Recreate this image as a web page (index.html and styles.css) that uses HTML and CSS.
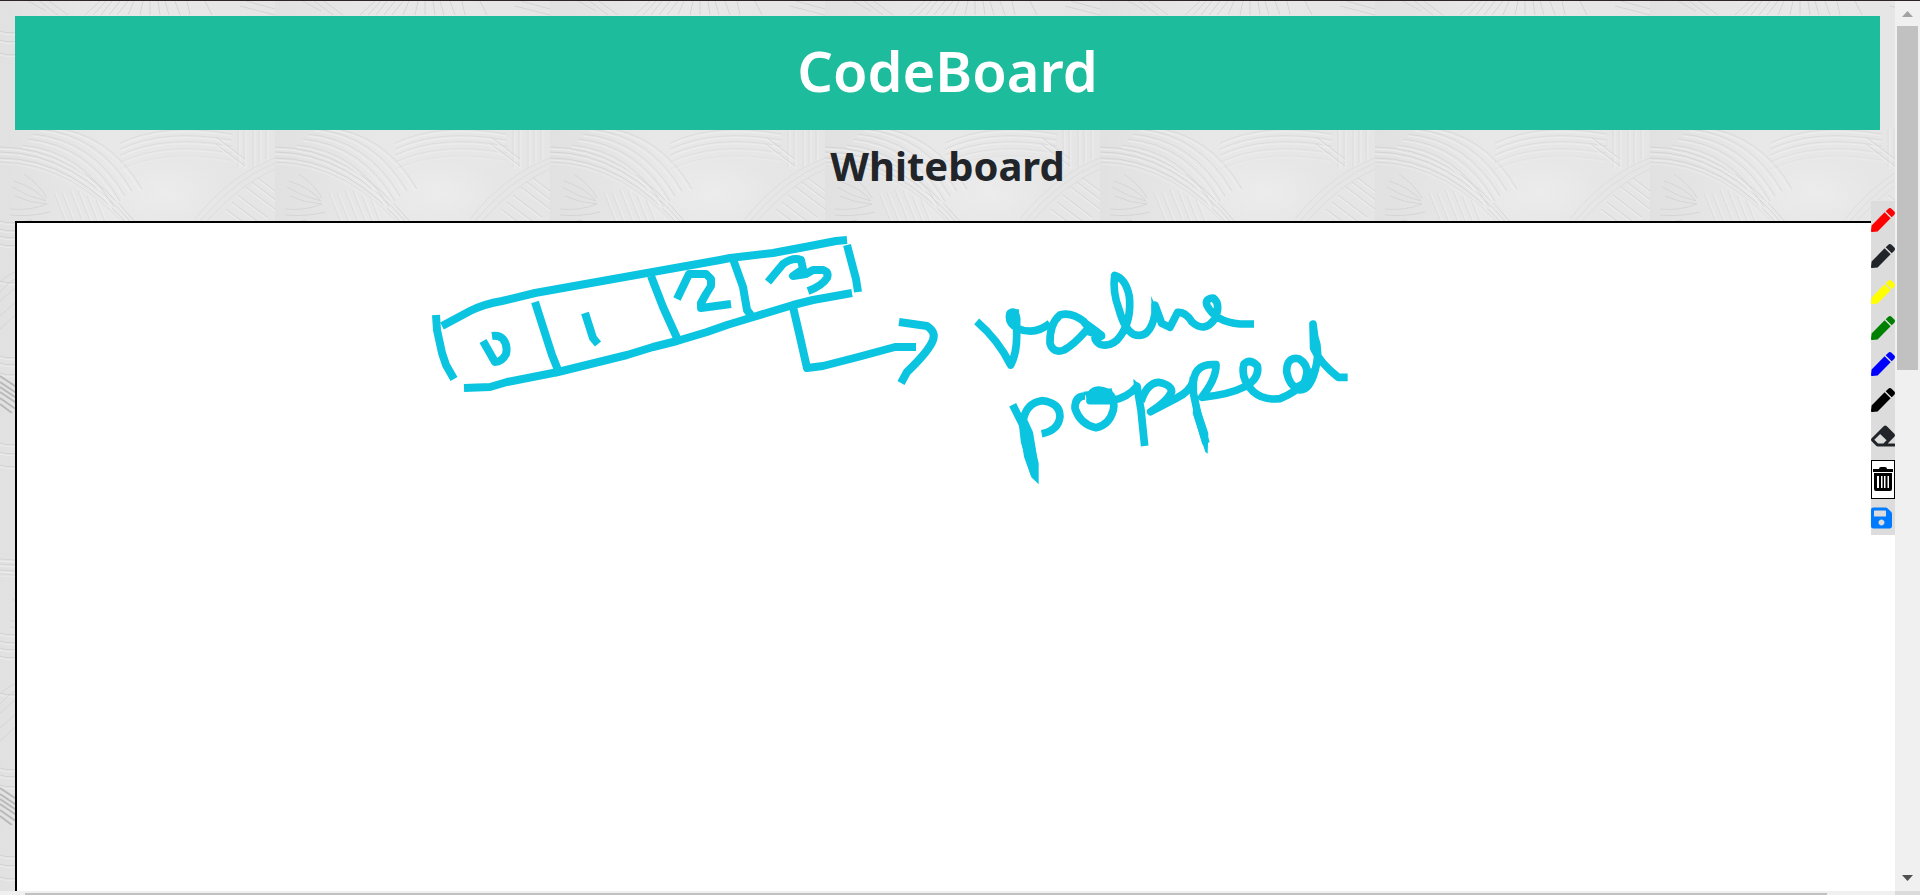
FILE: index.html
```html
<!DOCTYPE html>
<html lang="en">
<head>
<meta charset="utf-8">
<title>CodeBoard</title>
<link rel="stylesheet" href="styles.css">
</head>
<body>
<svg class="symbols" aria-hidden="true">
  <symbol id="pen" viewBox="0 0 512 512"><path d="M290.74 93.24l128.02 128.02-277.99 277.99-114.14 12.6C11.35 513.54-1.56 500.62.14 485.34l12.7-114.22 277.9-277.88zm207.2-19.06l-60.11-60.11c-18.75-18.75-49.16-18.75-67.91 0l-56.55 56.55 128.02 128.02 56.55-56.55c18.75-18.76 18.75-49.16 0-67.91z"/></symbol>
</svg>
<div class="window">
  <div class="page">
    <header class="banner"><h1>CodeBoard</h1></header>
    <h2 class="section-title">Whiteboard</h2>
    <main class="board">
      <svg class="drawing" viewBox="17 223 1400 300" role="img" aria-label="Array with cells 0 to 3, last value popped">
        <g class="ink">
          <path d="M436 315L437 330L442 353L446 365L454 379"/>
          <path d="M442 326L470 311Q484 304 502 301L535 293L720 260L730 258L773 253L805 247L836 241L847 240"/>
          <path d="M464 388L490 387L507 382L558 372L627 355L653 347L677 341L707 332L727 325L750 318L793 305L813 300L852 293"/>
          <path d="M535 302L552 355L560 375"/>
          <path d="M651 276L663 307L677 338"/>
          <path d="M733 259L743 287L747 310L753 318"/>
          <path d="M847 245L856 279L858 292"/>
          <path d="M483 341L495 362Q502 362 506 354Q508 345 503 339Q499 335 492 336"/>
          <path d="M585 313L593 338L598 344"/>
          <path d="M677 299L689 274L706 274L711 279V286L706 294L701 303V308L731 304"/>
          <path d="M768 282L783 264Q793 257 801 260L803 269L793 276L806 274L813 270H823Q829 272 827 278Q822 286 808 291"/>
          <path d="M793 307L800 337L807 368L823 366L858 357L895 347H916"/>
          <path d="M899 322L927 326Q936 332 933 340Q929 351 907 372L901 383"/>
        </g>
        <g class="ink ink-script" transform="translate(950 250) scale(.33333)">
          <path d="M80 214Q145 270 182 345Q200 310 200 260V205Q195 178 180 190Q172 220 205 236Q255 257 300 220"/>
          <path d="M405 217Q365 185 330 195Q298 222 300 280Q310 312 342 300Q370 285 408 242L455 258L405 220L440 245Q427 268 450 283Q488 293 512 257Q545 210 538 140Q528 86 494 76Q487 125 507 178Q522 236 550 253Q600 270 615 192V165L635 220L660 232L683 187Q708 185 726 216Q764 250 794 207Q814 163 790 144Q764 145 771 166Q795 215 870 222H912"/>
          <path d="M188 464L218 524L224 575L240 630L253 670L247 605L238 550L220 510Q228 460 275 452Q330 458 330 500Q325 542 275 551"/>
          <path d="M405 438Q375 438 375 475Q390 523 438 533Q478 525 490 480Q500 425 445 420Q420 422 420 452H485Q533 443 561 409L573 480L584 588"/>
          <path d="M573 455Q590 400 625 397Q664 404 665 425Q650 455 602 485L680 444Q720 425 731 390Q738 339 798 344Q800 385 755 442Q835 435 885 410Q930 385 922 347Q899 325 882 342Q870 385 910 425Q940 452 990 446Q1040 426 1070 390Q1079 345 1046 326Q1010 320 1010 365Q1018 410 1050 420Q1085 420 1100 340Q1108 298 1094 260L1089 222L1091 295Q1110 340 1165 382H1193"/>
          <path d="M730 380V428L745 500L768 580"/>
          <path d="M1088 365L1070 405M1035 414L1075 395"/>
          <path class="ink-fill" d="M550 386L572 407L568 425L552 420ZM603 138L630 195L608 210ZM180 178H207V225H176ZM230 510L250 570L266 640V703L244 682L222 620L208 520ZM735 430L775 550L773 611L766 606L728 490ZM1060 365L1095 350L1100 380L1083 415L1045 425ZM405 205L465 250L445 272L400 235ZM400 425L485 415L495 460H420Z"/>
        </g>
      </svg>
    </main>
    <div class="tools" role="toolbar" aria-label="Drawing tools">
      <button class="tool red" aria-label="Red pen"><svg><use href="#pen"/></svg></button>
      <button class="tool" aria-label="Dark pen"><svg><use href="#pen"/></svg></button>
      <button class="tool yellow" aria-label="Yellow pen"><svg><use href="#pen"/></svg></button>
      <button class="tool green" aria-label="Green pen"><svg><use href="#pen"/></svg></button>
      <button class="tool blue" aria-label="Blue pen"><svg><use href="#pen"/></svg></button>
      <button class="tool black" aria-label="Black pen"><svg><use href="#pen"/></svg></button>
      <button class="tool" aria-label="Eraser"><svg viewBox="0 0 512 512"><path d="M497.941 273.941c18.745-18.745 18.745-49.137 0-67.882l-160-160c-18.745-18.745-49.136-18.746-67.883 0l-256 256c-18.745 18.745-18.745 49.137 0 67.882l96 96A48.004 48.004 0 0 0 144 480h356c6.627 0 12-5.373 12-12v-40c0-6.627-5.373-12-12-12H355.883l142.058-142.059zm-302.627-62.627l137.373 137.373L265.373 416H150.628l-80-80 124.686-124.686z"/></svg></button>
      <button class="tool clear" aria-label="Clear board"><svg viewBox="0 0 22 26"><path d="M1 2H7Q7 0 9 0H13Q15 0 15 2H21V5H1Z"/><path fill-rule="evenodd" d="M2 6H20V22Q20 24 18 24H4Q2 24 2 22ZM5 9V21H7V9ZM9 9V21H10.500V9ZM12 9V21H13.500V9ZM15.500 9V21H17V9Z"/></svg></button>
      <button class="tool save" aria-label="Save"><svg viewBox="0 0 448 512"><path d="M433.941 129.941l-83.882-83.882A48 48 0 0 0 316.118 32H48C21.49 32 0 53.49 0 80v352c0 26.51 21.49 48 48 48h352c26.51 0 48-21.49 48-48V163.882a48 48 0 0 0-14.059-33.941zM224 416c-35.346 0-64-28.654-64-64 0-35.346 28.654-64 64-64s64 28.654 64 64c0 35.346-28.654 64-64 64zm96-304.52V212c0 6.627-5.373 12-12 12H76c-6.627 0-12-5.373-12-12V108c0-6.627 5.373-12 12-12h228.52c3.183 0 6.235 1.264 8.485 3.515l3.48 3.48A11.996 11.996 0 0 1 320 111.48z"/></svg></button>
    </div>
  </div>
  <div class="scroll-y" aria-hidden="true">
    <svg class="arrow" viewBox="0 0 25 25"><path fill="#a3a3a3" d="M7 16L12.500 10L18 16Z"/></svg>
    <div class="track-y"><div class="thumb-y"></div></div>
    <svg class="arrow" viewBox="0 0 25 25"><path fill="#505050" d="M7 9H18L12.500 15Z"/></svg>
  </div>
  <div class="scroll-x" aria-hidden="true"><div class="thumb-x"></div></div>
  <div class="corner" aria-hidden="true"></div>
</div>
</body>
</html>
```
FILE: styles.css
```css
* {
  box-sizing: border-box;
}

body {
  margin: 0;
  color: #212529;
  font-family: "Noto Sans", "Open Sans", sans-serif;
}

.symbols {
  position: absolute;
  width: 0;
  height: 0;
}

.window {
  display: grid;
  grid-template-columns: minmax(0, 1fr) 25px;
  grid-template-rows: minmax(0, 1fr) 4px;
  height: 100vh;
  border-top: 1px solid #2b2529;
  overflow: hidden;
}

/* Brushed plaster tile */
.page {
  position: relative;
  display: flex;
  flex-direction: column;
  padding: 15px 0 0 15px;
  overflow: hidden;
  background-color: #e5e5e5;
  background-size: 275px 412px;
  background-image: url("data:image/svg+xml,%3Csvg xmlns='http://www.w3.org/2000/svg' xmlns:xlink='http://www.w3.org/1999/xlink' width='275' height='412' viewBox='0 0 275 412'%3E%3Cdefs%3E%3ClinearGradient id='l'%3E%3Cstop stop-color='%23e1e1e1'/%3E%3Cstop offset='.4' stop-color='%23e8e8e8'/%3E%3Cstop offset='1' stop-color='%23e5e5e5'/%3E%3C/linearGradient%3E%3CradialGradient id='b'%3E%3Cstop stop-color='%23ececec'/%3E%3Cstop offset='1' stop-color='%23ececec' stop-opacity='0'/%3E%3C/radialGradient%3E%3Cg id='a' fill='none'%3E%3Cpath stroke='%23cecece' d='M0 146Q75 146 136 222'/%3E%3Cpath stroke='%23f1f1f1' d='M0 148Q73 148 134 224'/%3E%3C/g%3E%3Cg id='c' fill='none'%3E%3Cpath stroke='%23d3d3d3' d='M40 128Q100 134 132 190'/%3E%3Cpath stroke='%23f2f2f2' d='M40 130Q97 136 130 192'/%3E%3C/g%3E%3Cg id='d' fill='none'%3E%3Cpath stroke='%23d7d7d7' d='M120 142Q165 121 232 133'/%3E%3Cpath stroke='%23f1f1f1' d='M121 144Q165 123 231 135'/%3E%3C/g%3E%3Cg id='v'%3E%3Cpath stroke='%23d9d9d9' d='M238 128V166'/%3E%3Cpath stroke='%23efefef' d='M240 128V168'/%3E%3C/g%3E%3Cg id='h' fill='none'%3E%3Cpath stroke='%23d0d0d0' d='M246 186L275 208'/%3E%3Cpath stroke='%23f1f1f1' d='M246 188L275 210'/%3E%3C/g%3E%3Cg id='k'%3E%3Cpath stroke='%23dadada' d='M54 192L66 222'/%3E%3Cpath stroke='%23efefef' d='M56 192L68 222'/%3E%3C/g%3E%3Cg id='s' fill='none'%3E%3Cpath stroke='%23cccccc' d='M0 220Q10 224 32 219'/%3E%3Cpath stroke='%23eeeeee' d='M0 222Q10 226 32 221'/%3E%3C/g%3E%3C/defs%3E%3Crect width='275' height='412' fill='url(%23l)'/%3E%3Cellipse cx='165' cy='192' rx='60' ry='35' fill='url(%23b)'/%3E%3Cg stroke-width='1' opacity='.7'%3E%3Cuse xlink:href='%23a'/%3E%3Cuse xlink:href='%23a' y='5'/%3E%3Cuse xlink:href='%23a' y='11'/%3E%3Cuse xlink:href='%23a' y='15' opacity='.6'/%3E%3Cuse xlink:href='%23c'/%3E%3Cuse xlink:href='%23c' x='10' y='-2'/%3E%3Cuse xlink:href='%23c' x='-7' y='5'/%3E%3Cuse xlink:href='%23c' x='-12' y='10'/%3E%3Cuse xlink:href='%23c' x='-18' y='16'/%3E%3Cuse xlink:href='%23d'/%3E%3Cuse xlink:href='%23d' y='6'/%3E%3Cuse xlink:href='%23d' y='12'/%3E%3Cuse xlink:href='%23d' y='19' opacity='.7'/%3E%3Cuse xlink:href='%23d' y='26' opacity='.4'/%3E%3Cuse xlink:href='%23v'/%3E%3Cuse xlink:href='%23v' x='6'/%3E%3Cuse xlink:href='%23v' x='15'/%3E%3Cuse xlink:href='%23v' x='21' y='-4'/%3E%3Cuse xlink:href='%23v' x='28' y='-8'/%3E%3Cuse xlink:href='%23h'/%3E%3Cuse xlink:href='%23h' x='6' y='-5'/%3E%3Cuse xlink:href='%23h' x='12' y='-9'/%3E%3Cuse xlink:href='%23h' x='-8' y='8'/%3E%3Cuse xlink:href='%23h' x='-14' y='15'/%3E%3Cuse xlink:href='%23h' x='-20' y='22'/%3E%3Cuse xlink:href='%23h' x='-30' y='-50'/%3E%3Cuse xlink:href='%23h' x='-30' y='-43'/%3E%3Cpath d='M200 220Q235 178 275 162M207 220Q240 183 275 168M195 218Q230 174 275 157' fill='none' stroke='%23d8d8d8'/%3E%3Cuse xlink:href='%23k'/%3E%3Cuse xlink:href='%23k' x='8'/%3E%3Cuse xlink:href='%23k' x='16' y='-3'/%3E%3Cuse xlink:href='%23k' x='24' y='-2'/%3E%3Cuse xlink:href='%23k' x='33' y='3'/%3E%3Cuse xlink:href='%23k' x='42' y='7'/%3E%3Cpath d='M12 186Q28 196 46 200M14 180Q36 187 46 200M15 195Q30 202 47 203M10 208Q30 210 47 203M10 214Q30 216 50 211M24 173Q40 184 47 197' fill='none' stroke='%23cfcfcf'/%3E%3Cuse xlink:href='%23s'/%3E%3Cuse xlink:href='%23s' y='8'/%3E%3Cuse xlink:href='%23s' y='15'/%3E%3Cuse xlink:href='%23s' y='23'/%3E%3Cuse xlink:href='%23s' y='60'/%3E%3Cuse xlink:href='%23s' y='135'/%3E%3Cuse xlink:href='%23s' y='142'/%3E%3Cuse xlink:href='%23s' y='152'/%3E%3Cuse xlink:href='%23s' y='-190'/%3E%3Cuse xlink:href='%23s' y='-181'/%3E%3Cuse xlink:href='%23s' y='-168'/%3E%3Cpath d='M0 281Q10 271 24 268M0 291Q12 277 24 274M0 300Q12 288 24 282M0 315L24 294M0 328L24 306' fill='none' stroke='%23cfcfcf'/%3E%3Cpath d='M0 375L24 391M0 381L24 397M0 386L24 402M0 391L24 407M0 397L20 411M0 403L12 412' stroke='%23a8a8a8' stroke-width='2'/%3E%3Cpath d='M28 0L46 10M34 -4L58 14M42 -5L68 14M85 14L100 0M93 14L106 0M101 14L112 0M109 14L120 0M117 14L128 0M128 14L134 0M140 14L143 0M150 14V0M160 14L158 0M169 14L165 0M180 14L175 0M190 14L187 0M212 14L205 0M240 5L275 14M246 0L275 8' stroke='%23cccccc'/%3E%3C/g%3E%3C/svg%3E");
}

.banner {
  flex: none;
  margin-right: 15px;
  padding: 14px 16px 20px;
  background: #1cbc9c;
  color: #fff;
  text-align: center;
}

.banner h1 {
  margin: 0;
  font-size: 56px;
  font-weight: 600;
  line-height: 80px;
}

.section-title {
  flex: none;
  margin: 0 15px 0 0;
  padding: 8px 0 27px;
  font-size: 40px;
  font-weight: 700;
  line-height: 56px;
  text-align: center;
}

.board {
  flex: 1;
  min-height: 0;
  border: 2px solid #000;
  border-width: 2px 0 0 2px;
  background: #fff;
  overflow: hidden;
}

.drawing {
  display: block;
  width: 1400px;
  height: 300px;
}

.ink {
  fill: none;
  stroke: #0bc4e0;
  stroke-width: 8;
  stroke-linejoin: round;
}

.ink-script {
  stroke-width: 23;
}

.ink-fill {
  fill: #0bc4e0;
  stroke: none;
}

/* Floating tool strip on the right edge of the board */
.tools {
  position: absolute;
  top: 200px;
  right: 0;
  display: flex;
  flex-direction: column;
  width: 24px;
  padding-top: 1px;
  background: #dcdcdc;
}

.tool {
  display: flex;
  align-items: center;
  justify-content: center;
  height: 36px;
  padding: 0;
  border: 0;
  background: none;
  color: #212529;
}

.tool svg {
  width: 24px;
  height: 24px;
  fill: currentColor;
}

.red { color: #f00; }
.yellow { color: #ff0; }
.green { color: #008000; }
.blue { color: #00f; }
.black { color: #000; }

.clear {
  height: 39px;
  margin-top: 6px;
  border: 1px solid #000;
  background: #fff;
  color: #000;
}

.clear svg {
  width: 22px;
  height: 26px;
}

.save {
  justify-content: flex-start;
  padding-top: 2px;
  color: #007bff;
}

.save svg {
  width: 21px;
}

.scroll-y {
  display: flex;
  flex-direction: column;
  background: #f0f0f0;
}

.arrow {
  flex: none;
  width: 25px;
  height: 25px;
}

.track-y {
  flex: 1;
  padding: 0 2px;
}

.thumb-y {
  height: 41%;
  background: #c1c1c1;
}

.scroll-x {
  padding: 2px 68px 0 25px;
  background: #f0f0f0;
}

.thumb-x {
  height: 2px;
  background: #c1c1c1;
}

.corner {
  background: #dcdcdc;
}
```
